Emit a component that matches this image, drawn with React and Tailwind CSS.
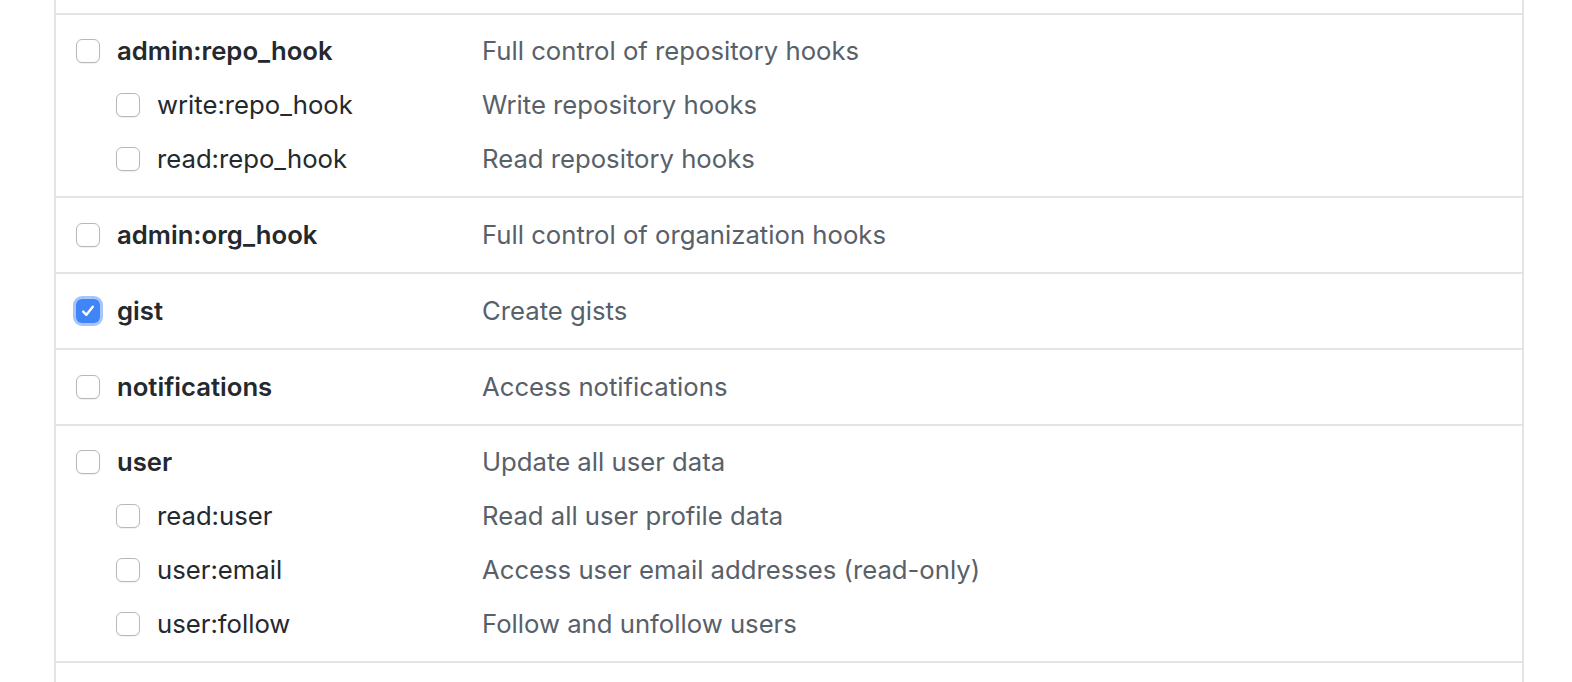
import React from 'react';

const SECTIONS = [
  {
    pad: 'pt-[9px] pb-[10px]',
    rows: [
      { name: 'admin:repo_hook', desc: 'Full control of repository hooks' },
      { name: 'write:repo_hook', desc: 'Write repository hooks', sub: true },
      { name: 'read:repo_hook', desc: 'Read repository hooks', sub: true },
    ],
  },
  { pad: 'py-[10px]', rows: [{ name: 'admin:org_hook', desc: 'Full control of organization hooks' }] },
  { pad: 'py-[10px]', rows: [{ name: 'gist', desc: 'Create gists', checked: true }] },
  { pad: 'py-[10px]', rows: [{ name: 'notifications', desc: 'Access notifications' }] },
  {
    pad: 'pt-[9px] pb-[10px]',
    rows: [
      { name: 'user', desc: 'Update all user data' },
      { name: 'read:user', desc: 'Read all user profile data', sub: true },
      { name: 'user:email', desc: 'Access user email addresses (read-only)', sub: true },
      { name: 'user:follow', desc: 'Follow and unfollow users', sub: true },
    ],
  },
];

function Checkbox({ checked }) {
  if (checked) {
    return (
      <div className="w-6 h-6 rounded-[6px] bg-[#3f85f5] flex items-center justify-center shrink-0 ring-[3px] ring-[#a6c6f9]">
        <svg width="16" height="16" viewBox="0 0 16 16" fill="none">
          <path d="M3.2 8.6 L6.4 11.8 L12.8 3.8" stroke="white" strokeWidth="2.4" strokeLinecap="round" strokeLinejoin="round" />
        </svg>
      </div>
    );
  }
  return <div className="w-6 h-6 rounded-[6px] border border-[#b8b8b8] bg-white shrink-0 shadow-[0_1px_1px_rgba(0,0,0,0.06)]" />;
}

function ScopeRow({ name, desc, sub, checked }) {
  return (
    <div className="flex items-center h-[54px]">
      <div className={`w-[406px] flex items-center shrink-0 ${sub ? 'pl-[40px]' : ''}`}>
        <Checkbox checked={checked} />
        <span className={`ml-[17px] text-[#24292e] ${sub ? 'font-normal' : 'font-semibold'}`}>{name}</span>
      </div>
      <span className="text-[#586069]">{desc}</span>
    </div>
  );
}

export default function App() {
  return (
    <div className="w-[1572px] h-[682px] bg-white overflow-hidden" style={{ fontFamily: 'Inter, "Liberation Sans", sans-serif' }}>
      <div className="ml-[54px] w-[1470px] h-full border-x-2 border-[#e4e4e4] text-[25.7px] leading-none">
        <div className="h-[13px]" />
        {SECTIONS.map((s, i) => (
          <div key={i} className={`border-t-2 border-[#e4e4e4] pl-[20px] ${s.pad}`}>
            {s.rows.map(r => <ScopeRow key={r.name} {...r} />)}
          </div>
        ))}
        <div className="border-t-2 border-[#e4e4e4]" />
      </div>
    </div>
  );
}
